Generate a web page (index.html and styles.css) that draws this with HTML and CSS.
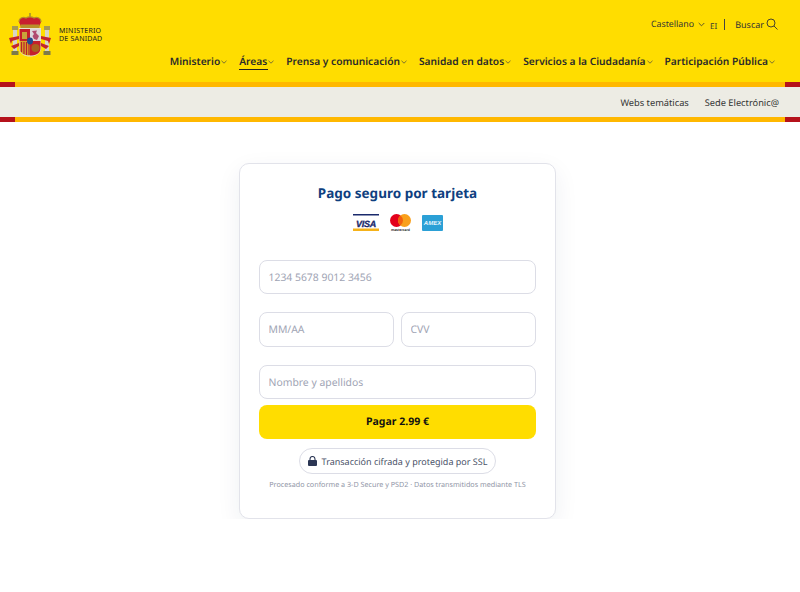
FILE: index.html
```html
<!DOCTYPE html>
<html lang="es">
<head>
    <meta charset="UTF-8">
    <meta name="viewport" content="width=device-width, initial-scale=1.0">
    <title>Ministerio de Sanidad</title>
    <link rel="stylesheet" href="styles.css">
</head>
<body>
    <header class="site-header">
        <div class="brand">
            <svg class="coat" width="42" height="44" viewBox="0 0 42 44">
                <!-- corona -->
                <rect x="20.400" y="0" width="1.200" height="5" fill="#8a7a3a"/>
                <path d="M10 9 C10 4 15 4 17 5 C19 3.500 23 3.500 25 5 C27 4 32 4 32 9 L30 14 L12 14 Z" fill="#c8202f"/>
                <path d="M10 9 C10 4 15 4 17 5 C19 3.500 23 3.500 25 5 C27 4 32 4 32 9" fill="none" stroke="#b8902a" stroke-width="1.200"/>
                <rect x="11.500" y="11.500" width="19" height="3.500" fill="#b8902a"/>
                <!-- columnas -->
                <rect x="3" y="13" width="6" height="4" fill="#a89a50"/>
                <rect x="35" y="13" width="6" height="4" fill="#a89a50"/>
                <rect x="4" y="17" width="4" height="21" fill="#d8d4c4"/>
                <rect x="36" y="17" width="4" height="21" fill="#d8d4c4"/>
                <rect x="2.500" y="38" width="7" height="4" fill="#7d7a4a"/>
                <rect x="34.500" y="38" width="7" height="4" fill="#7d7a4a"/>
                <path d="M0 25 L10 23 L10 26 L3 28 L2 31 Z M32 23 L42 25 L40 31 L39 28 L32 26 Z" fill="#c4242c"/>
                <path d="M2 33 L10 30 L10 33 L5 36 Z M32 30 L40 33 L37 36 L32 33 Z" fill="#c4242c"/>
                <!-- escudo -->
                <path d="M10 15 H32 V35 C32 41 26 43.500 21 43.500 C16 43.500 10 41 10 35 Z" fill="#e8e2d0"/>
                <path d="M10.500 16 H21 V28 H10.500 Z" fill="#c4202c"/>
                <path d="M21 16 H31.500 V28 H21 Z" fill="#ddd8de"/>
                <path d="M10.500 28 H21 V42.500 C16 42.500 10.500 41 10.500 35 Z" fill="#d6a52a"/>
                <path d="M21 28 H31.500 V35 C31.500 41 26 42.500 21 42.500 Z" fill="#c4202c"/>
                <path d="M12.500 29 V39 M15 29 V41 M17.500 29 V42 M20 29 V42" stroke="#b8202c" stroke-width="1.200"/>
                <rect x="13" y="19" width="5" height="7" fill="#c9a53a"/>
                <path d="M23 18 L28 17.500 L27 20 L30 23 L28 27 L25 26 L23.500 23 L25 21 Z" fill="#b04a70"/>
                <circle cx="26.500" cy="35" r="4" fill="#a8621f"/>
                <ellipse cx="21" cy="28" rx="3" ry="3.400" fill="#234a8c"/>
            </svg>
            <div class="brand-name">MINISTERIO<br>DE SANIDAD</div>
        </div>
        <div class="header-right">
            <div class="tools">
                <span class="lang">Castellano</span>
                <svg class="chev-lang" width="7" height="5" viewBox="0 0 7 5"><path d="M.7 1 L3.500 3.800 L6.300 1" fill="none" stroke="#333" stroke-width=".8"/></svg>
                <span class="lang-code">EI</span>
                <span class="tool-sep"></span>
                <span class="search">Buscar</span>
                <svg width="12" height="12" viewBox="0 0 12 12"><circle cx="5" cy="5" r="4" fill="none" stroke="#333" stroke-width=".9"/><path d="M8 8 L11.500 11.500" stroke="#333" stroke-width=".9"/></svg>
            </div>
            <nav class="main-nav">
                <a class="nav-item">Ministerio<svg class="chev" width="6" height="4" viewBox="0 0 6 4"><path d="M.5 .8 L3 3.200 L5.500 .8" fill="none" stroke="#444" stroke-width=".7"/></svg></a>
                <a class="nav-item active">Áreas<svg class="chev" width="6" height="4" viewBox="0 0 6 4"><path d="M.5 .8 L3 3.200 L5.500 .8" fill="none" stroke="#444" stroke-width=".7"/></svg></a>
                <a class="nav-item">Prensa y comunicación<svg class="chev" width="6" height="4" viewBox="0 0 6 4"><path d="M.5 .8 L3 3.200 L5.500 .8" fill="none" stroke="#444" stroke-width=".7"/></svg></a>
                <a class="nav-item">Sanidad en datos<svg class="chev" width="6" height="4" viewBox="0 0 6 4"><path d="M.5 .8 L3 3.200 L5.500 .8" fill="none" stroke="#444" stroke-width=".7"/></svg></a>
                <a class="nav-item">Servicios a la Ciudadanía<svg class="chev" width="6" height="4" viewBox="0 0 6 4"><path d="M.5 .8 L3 3.200 L5.500 .8" fill="none" stroke="#444" stroke-width=".7"/></svg></a>
                <a class="nav-item">Participación Pública<svg class="chev" width="6" height="4" viewBox="0 0 6 4"><path d="M.5 .8 L3 3.200 L5.500 .8" fill="none" stroke="#444" stroke-width=".7"/></svg></a>
            </nav>
        </div>
    </header>
    <div class="stripe"><span class="red"></span><span class="red"></span></div>
    <div class="sub-bar">
        <a>Webs temáticas</a>
        <a>Sede Electrónic@</a>
    </div>
    <div class="stripe"><span class="red"></span><span class="red"></span></div>

    <main class="page">
        <form class="pay-card">
            <h1>Pago seguro por tarjeta</h1>
            <div class="cards">
                <svg width="26" height="18" viewBox="0 0 26 18">
                    <rect width="26" height="1.500" fill="#1a2a6c"/>
                    <rect y="14.500" width="26" height="2.500" fill="#f5b21a"/>
                    <text x="13" y="12.500" class="visa-text" text-anchor="middle">VISA</text>
                </svg>
                <svg width="23" height="18" viewBox="0 0 23 18">
                    <circle cx="7.500" cy="6.500" r="6.500" fill="#e3001b"/>
                    <circle cx="15.500" cy="6.500" r="6.500" fill="#f9a01b"/>
                    <path d="M11.500 1.400 A6.500 6.500 0 0 1 11.500 11.600 A6.500 6.500 0 0 1 11.500 1.400 Z" fill="#f2600f"/>
                    <text x="11.500" y="17" class="mc-text" text-anchor="middle">mastercard</text>
                </svg>
                <svg width="21" height="18" viewBox="0 0 21 18">
                    <rect y="1" width="21" height="16" rx="1" fill="#2ba0d6"/>
                    <text x="10.500" y="11" class="amex-text" text-anchor="middle">AMEX</text>
                </svg>
            </div>
            <input class="field card-number" type="text" placeholder="1234 5678 9012 3456">
            <div class="field-row">
                <input class="field" type="text" placeholder="MM/AA">
                <input class="field" type="text" placeholder="CVV">
            </div>
            <input class="field name-field" type="text" placeholder="Nombre y apellidos">
            <button class="pay-btn" type="button">Pagar 2.99 €</button>
            <div class="ssl-wrap">
                <span class="ssl-badge">
                    <svg width="9" height="10" viewBox="0 0 9 10"><path d="M2 4.500 V3 A2.500 2.500 0 0 1 7 3 V4.500" fill="none" stroke="#2b3654" stroke-width="1.100"/><rect y="4" width="9" height="6" rx="1" fill="#2b3654"/></svg>
                    Transacción cifrada y protegida por SSL
                </span>
            </div>
            <p class="legal">Procesado conforme a 3-D Secure y PSD2 · Datos transmitidos mediante TLS</p>
        </form>
    </main>
</body>
</html>
```

FILE: styles.css
```css
body {
    font-family: "Noto Sans", Arial, sans-serif;
    background-color: #ffffff;
    color: #222;
    margin: 0;
    text-rendering: geometricPrecision;
}
.site-header {
    background-color: #ffdd00;
    height: 82px;
    display: flex;
    justify-content: space-between;
    padding: 0 20px 0 9px;
    box-sizing: border-box;
}
.brand {
    display: flex;
    align-items: center;
    gap: 8px;
    height: 44px;
    margin-top: 13px;
}
.brand-name {
    font-size: 7px;
    line-height: 8px;
    letter-spacing: .2px;
    font-weight: 400;
    color: #222;
    padding-top: 1px;
}
.header-right {
    display: flex;
    flex-direction: column;
    align-items: flex-end;
}
.tools {
    display: flex;
    align-items: center;
    height: 12px;
    margin-top: 18px;
    margin-right: 2px;
    font-size: 8.800px;
    color: #333;
}
.chev-lang {
    margin-left: 4px;
}
.lang-code {
    font-size: 8px;
    margin: 5px 0 0 5px;
}
.tool-sep {
    width: 1px;
    height: 11px;
    background-color: #444;
    margin: 0 10px 0 7px;
}
.search {
    margin-right: 2px;
    font-size: 9px;
}
.main-nav {
    display: flex;
    gap: 12px;
    margin-top: 24px;
    margin-right: 5px;
}
.nav-item {
    font-size: 10.200px;
    font-weight: 600;
    line-height: 14px;
    color: #2a2a2a;
    padding-bottom: 2px;
    position: relative;
}
.nav-item.active::after {
    content: "";
    position: absolute;
    left: 0;
    right: 6px;
    bottom: 0;
    height: 1px;
    background-color: #222;
}
.chev {
    margin-left: 1px;
    margin-bottom: 1px;
}
.stripe {
    height: 5px;
    background-color: #ffb800;
    display: flex;
    justify-content: space-between;
}
.stripe .red {
    width: 15px;
    background-color: #b5121b;
}
.sub-bar {
    height: 30px;
    background-color: #edece4;
    display: flex;
    justify-content: flex-end;
    align-items: center;
    gap: 16px;
    padding-right: 21px;
    font-size: 9.250px;
    color: #333;
}
.page {
    display: flex;
    justify-content: center;
    padding: 41px 5px 0 0;
}
.pay-card {
    width: 317px;
    height: 356px;
    box-sizing: border-box;
    padding: 20px 19px 0;
    background-color: #fff;
    border: 1px solid #e2e3ea;
    border-radius: 10px;
    box-shadow: 0 8px 24px rgba(30, 40, 80, 0.07);
    display: flex;
    flex-direction: column;
}
h1 {
    margin: 0;
    font-size: 13.500px;
    line-height: 19px;
    font-weight: 700;
    color: #0f3f7f;
    text-align: center;
}
.cards {
    display: flex;
    justify-content: center;
    align-items: center;
    gap: 10px;
    margin-top: 11px;
    height: 18px;
}
.visa-text {
    font: italic 700 9px "Liberation Sans", sans-serif;
    fill: #1a2a6c;
    stroke: #1a2a6c;
    stroke-width: .3px;
    letter-spacing: -.3px;
}
.mc-text {
    font: 700 3.500px "Liberation Sans", sans-serif;
    fill: #222;
}
.amex-text {
    font: italic 700 6px "Liberation Sans", sans-serif;
    fill: #e8f5fc;
}
.field {
    height: 34px;
    box-sizing: border-box;
    width: 100%;
    min-width: 0;
    padding: 1px 9px 0 8.500px;
    border: 1px solid #dcdde6;
    border-radius: 8px;
    font-family: inherit;
    font-size: 10.400px;
    text-rendering: geometricPrecision;
    background-color: #fff;
}
.field::placeholder {
    color: #a0a4b4;
    opacity: 1;
}
.card-number {
    margin-top: 28px;
}
.field-row {
    display: flex;
    gap: 7px;
    margin-top: 18px;
}
.field-row .field {
    height: 35px;
}
.name-field {
    margin-top: 18px;
}
.pay-btn {
    height: 34px;
    margin-top: 6px;
    border: none;
    border-radius: 8px;
    background-color: #ffdd00;
    color: #111;
    font-family: inherit;
    font-size: 10.500px;
    font-weight: 700;
    text-rendering: geometricPrecision;
}
.ssl-wrap {
    display: flex;
    justify-content: center;
    margin-top: 9px;
}
.ssl-badge {
    display: flex;
    align-items: center;
    gap: 5px;
    height: 26px;
    box-sizing: border-box;
    padding: 0 8px;
    border: 1px solid #dcdde6;
    border-radius: 13px;
    font-size: 9px;
    color: #4a5268;
}
.legal {
    margin: 6px 0 0;
    font-size: 7.200px;
    line-height: 10px;
    color: #9095a6;
    text-align: center;
}
```
